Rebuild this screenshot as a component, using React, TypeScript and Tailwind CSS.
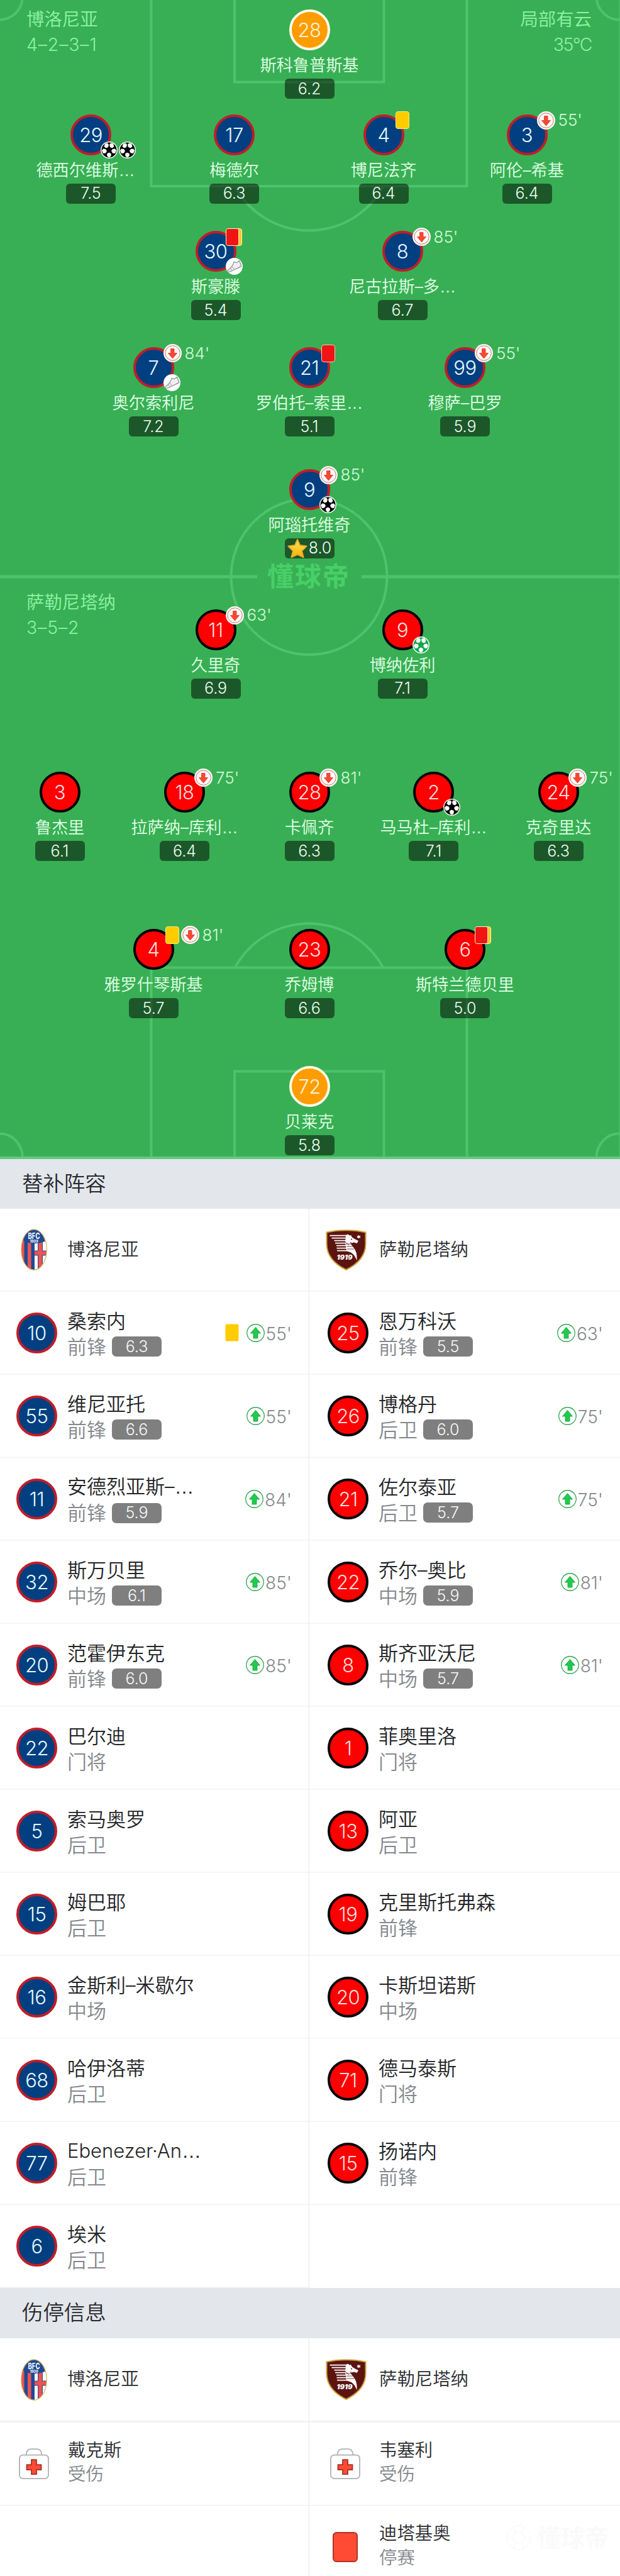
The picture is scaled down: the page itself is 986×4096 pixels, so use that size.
import clsx from 'clsx'

type Mark = 'yellow' | 'red' | 'second-yellow' | 'off'
type Bonus = 'goal' | 'penalty' | 'assist'
type Kit = 'bologna' | 'salernitana' | 'keeper'

interface PitchPlayer {
  x: number
  y: number
  no: number
  name: string
  rating: string
  kit: Kit
  marks?: Mark[]
  minute?: string
  bonus?: Bonus[]
  star?: boolean
  shifted?: boolean
}

interface BenchPlayer {
  no: number
  name: string
  role: string
  rating?: string
  minute?: string
  yellow?: boolean
}

const PLAYERS: PitchPlayer[] = [
  { x: 492, y: 47.5, no: 28, name: '斯科鲁普斯基', rating: '6.2', kit: 'keeper' },
  { x: 144.5, y: 214, no: 29, name: '德西尔维斯…', rating: '7.5', kit: 'bologna', bonus: ['goal', 'goal'], shifted: true },
  { x: 372.5, y: 214, no: 17, name: '梅德尔', rating: '6.3', kit: 'bologna' },
  { x: 610, y: 214, no: 4, name: '博尼法齐', rating: '6.4', kit: 'bologna', marks: ['yellow'] },
  { x: 838, y: 214, no: 3, name: '阿伦–希基', rating: '6.4', kit: 'bologna', marks: ['off'], minute: "55'" },
  { x: 343, y: 399.5, no: 30, name: '斯豪滕', rating: '5.4', kit: 'bologna', marks: ['second-yellow'], bonus: ['assist'] },
  { x: 640, y: 399.5, no: 8, name: '尼古拉斯–多…', rating: '6.7', kit: 'bologna', marks: ['off'], minute: "85'" },
  { x: 244, y: 584.5, no: 7, name: '奥尔索利尼', rating: '7.2', kit: 'bologna', marks: ['off'], minute: "84'", bonus: ['assist'] },
  { x: 492, y: 584.5, no: 21, name: '罗伯托–索里…', rating: '5.1', kit: 'bologna', marks: ['red'] },
  { x: 739.5, y: 584.5, no: 99, name: '穆萨–巴罗', rating: '5.9', kit: 'bologna', marks: ['off'], minute: "55'" },
  { x: 492, y: 778, no: 9, name: '阿瑙托维奇', rating: '8.0', kit: 'bologna', marks: ['off'], minute: "85'", bonus: ['goal'], star: true },
  { x: 343, y: 1001, no: 11, name: '久里奇', rating: '6.9', kit: 'salernitana', marks: ['off'], minute: "63'" },
  { x: 640, y: 1001, no: 9, name: '博纳佐利', rating: '7.1', kit: 'salernitana', bonus: ['penalty'] },
  { x: 95, y: 1259.5, no: 3, name: '鲁杰里', rating: '6.1', kit: 'salernitana' },
  { x: 293.5, y: 1259.5, no: 18, name: '拉萨纳–库利…', rating: '6.4', kit: 'salernitana', marks: ['off'], minute: "75'" },
  { x: 492, y: 1259.5, no: 28, name: '卡佩齐', rating: '6.3', kit: 'salernitana', marks: ['off'], minute: "81'" },
  { x: 689.5, y: 1259.5, no: 2, name: '马马杜–库利…', rating: '7.1', kit: 'salernitana', bonus: ['goal'] },
  { x: 888, y: 1259.5, no: 24, name: '克奇里达', rating: '6.3', kit: 'salernitana', marks: ['off'], minute: "75'" },
  { x: 244, y: 1509.5, no: 4, name: '雅罗什琴斯基', rating: '5.7', kit: 'salernitana', marks: ['yellow', 'off'], minute: "81'" },
  { x: 492, y: 1509.5, no: 23, name: '乔姆博', rating: '6.6', kit: 'salernitana' },
  { x: 739.5, y: 1509.5, no: 6, name: '斯特兰德贝里', rating: '5.0', kit: 'salernitana', marks: ['second-yellow'] },
  { x: 492, y: 1727.5, no: 72, name: '贝莱克', rating: '5.8', kit: 'keeper' },
]

const HOME_BENCH: BenchPlayer[] = [
  { no: 10, name: '桑索内', role: '前锋', rating: '6.3', minute: "55'", yellow: true },
  { no: 55, name: '维尼亚托', role: '前锋', rating: '6.6', minute: "55'" },
  { no: 11, name: '安德烈亚斯–…', role: '前锋', rating: '5.9', minute: "84'" },
  { no: 32, name: '斯万贝里', role: '中场', rating: '6.1', minute: "85'" },
  { no: 20, name: '范霍伊东克', role: '前锋', rating: '6.0', minute: "85'" },
  { no: 22, name: '巴尔迪', role: '门将' },
  { no: 5, name: '索马奥罗', role: '后卫' },
  { no: 15, name: '姆巴耶', role: '后卫' },
  { no: 16, name: '金斯利–米歇尔', role: '中场' },
  { no: 68, name: '哈伊洛蒂', role: '后卫' },
  { no: 77, name: 'Ebenezer·An…', role: '后卫' },
  { no: 6, name: '埃米', role: '后卫' },
]

const AWAY_BENCH: BenchPlayer[] = [
  { no: 25, name: '恩万科沃', role: '前锋', rating: '5.5', minute: "63'" },
  { no: 26, name: '博格丹', role: '后卫', rating: '6.0', minute: "75'" },
  { no: 21, name: '佐尔泰亚', role: '后卫', rating: '5.7', minute: "75'" },
  { no: 22, name: '乔尔–奥比', role: '中场', rating: '5.9', minute: "81'" },
  { no: 8, name: '斯齐亚沃尼', role: '中场', rating: '5.7', minute: "81'" },
  { no: 1, name: '菲奥里洛', role: '门将' },
  { no: 13, name: '阿亚', role: '后卫' },
  { no: 19, name: '克里斯托弗森', role: '前锋' },
  { no: 20, name: '卡斯坦诺斯', role: '中场' },
  { no: 71, name: '德马泰斯', role: '门将' },
  { no: 15, name: '扬诺内', role: '前锋' },
]

const KITS: Record<Kit, string> = {
  bologna: 'bg-[#023f80] border-[#c01d28] text-[#e4f8ff]',
  salernitana: 'bg-[#fe0000] border-black text-[#ffdede]',
  keeper: 'bg-[#ff9c00] border-[#fffbe6] text-[#fff3da]',
}

function Shirt({ no, kit }: { no: number; kit: Kit }) {
  return (
    <div
      className={clsx(
        'flex size-[65px] shrink-0 items-center justify-center rounded-full border-4 text-[31px] leading-none font-light tracking-[-0.5px]',
        KITS[kit],
      )}
    >
      {no}
    </div>
  )
}

// the ellipsis of a cut-off name takes a full em on the baseline
function Name({ children }: { children: string }) {
  if (!children.endsWith('…')) return <>{children}</>
  return (
    <>
      {children.slice(0, -1)}
      <span className="font-['Liberation_Sans']">…</span>
    </>
  )
}

function Ball({ color }: { color: string }) {
  return (
    <svg viewBox="0 0 54 54" className="size-[27px]">
      <circle cx="27" cy="27" r="27" fill="#f4fff6" />
      <circle cx="27" cy="27" r="24" fill={color} />
      <g fill="#fff">
        <path d="M14 7l8-2 4 5-2 8-7 3-6-5z" />
        <path d="M40 7l-8-2-4 5 2 8 7 3 6-5z" />
        <path d="M4 29l4-6 8 1 4 6-4 7-8 1z" />
        <path d="M50 29l-4-6-8 1-4 6 4 7 8 1z" />
        <path d="M27 35l7 4-1 8-6 4-6-4-1-8z" />
      </g>
    </svg>
  )
}

function Boot() {
  return (
    <svg viewBox="0 0 100 100" className="size-[27px]">
      <circle cx="50" cy="50" r="50" fill="#fff" />
      <path
        d="M6 78C20 72 26 60 34 52C42 44 46 36 48 23L62 29C68 27 72 21 80 17L92 48C76 60 62 62 50 70C36 80 20 84 9 83Z"
        fill="#f0f0f0"
        stroke="#858289"
        strokeWidth="4"
        strokeLinejoin="round"
      />
      <path d="M28 60L38 76M37 50L50 69" stroke="#858289" strokeWidth="3" />
    </svg>
  )
}

function OffIcon() {
  return (
    <svg viewBox="0 0 58 58" className="size-[29px] shrink-0">
      <circle cx="29" cy="29" r="29" fill="#fff8f5" />
      <circle cx="29" cy="29" r="23.5" fill="none" stroke="#b9535a" strokeWidth="1.6" />
      <path
        d="M23 15H34V29H43L29 46L15 29H23Z"
        fill="#fb4631"
        stroke="#d33526"
        strokeWidth="1.5"
        strokeLinejoin="round"
      />
    </svg>
  )
}

function OnIcon() {
  return (
    <svg viewBox="0 0 58 58" className="size-[29px] shrink-0">
      <circle cx="29" cy="29" r="27.5" fill="#fff" stroke="#33a853" strokeWidth="2.6" />
      <path
        d="M22 46H36V30H45L29 11L13 30H22Z"
        fill="#20cb4c"
        stroke="#169a3a"
        strokeWidth="1.5"
        strokeLinejoin="round"
      />
    </svg>
  )
}

function MarkIcon({ mark }: { mark: Mark }) {
  if (mark === 'off') return <OffIcon />
  if (mark === 'second-yellow') {
    return (
      <div className="h-7 w-[26px] rounded-[4px] border border-[#fff6b8] bg-[#fbc62a]">
        <div className="h-full w-5 rounded-[3px] border-r border-[#ffe0c0] bg-[#f01414]" />
      </div>
    )
  }
  return (
    <div
      className={clsx(
        'ml-[3px] h-7 w-[22px] rounded-[4px] border',
        mark === 'yellow' ? 'border-[#ffeb8a] bg-[#ffcc00]' : 'border-[#ffc9b0] bg-[#f01414]',
      )}
    />
  )
}

function Star() {
  return (
    <svg viewBox="0 0 72 72" className="-ml-[2px] size-9 shrink-0">
      <defs>
        <linearGradient id="star" x1="0" y1="0" x2="0" y2="1">
          <stop offset="0" stopColor="#ffe666" />
          <stop offset="1" stopColor="#ffb000" />
        </linearGradient>
      </defs>
      <path
        d="M36 8L44 26L65 29L50 44L55 64L36 55L17 64L22 44L7 29L28 26Z"
        fill="url(#star)"
        stroke="#f0ae22"
        strokeWidth="4"
        strokeLinejoin="round"
      />
    </svg>
  )
}

function PlayerPin({ player }: { player: PitchPlayer }) {
  const { x, y, no, name, rating, kit, marks, minute, bonus, star, shifted } = player
  return (
    <div
      className="absolute flex w-[200px] -translate-x-1/2 flex-col items-center"
      style={{ left: x, top: y - 32.5 }}
    >
      <div className="relative">
        <Shirt no={no} kit={kit} />
        {marks && (
          <div className="absolute -top-[5px] left-[48px] flex h-[29px] items-center gap-[3px]">
            {marks.map((m) => (
              <MarkIcon key={m} mark={m} />
            ))}
            {minute && (
              <span className="ml-[2px] text-[26px] leading-none font-light text-[#d3fbda]">{minute}</span>
            )}
          </div>
        )}
        {bonus && (
          <div className="absolute top-[43px] left-[48px] flex gap-[2px]">
            {bonus.map((b, i) =>
              b === 'assist' ? <Boot key={i} /> : <Ball key={i} color={b === 'goal' ? '#000' : '#12a84e'} />,
            )}
          </div>
        )}
      </div>
      <div
        className={clsx(
          'mt-[6px] text-[26.2px] leading-9 font-[350] whitespace-nowrap text-[#e0ffe6]',
          shifted && 'pr-[17px]',
        )}
      >
        <Name>{name}</Name>
      </div>
      <div className="mt-[3px] flex h-8 w-[79px] items-center justify-center rounded-[6px] bg-black/50 text-[25px] leading-none font-light text-[#ecfff0]">
        {star && <Star />}
        {rating}
      </div>
    </div>
  )
}

function PitchLines() {
  return (
    <svg viewBox="0 0 986 1843" className="absolute inset-0 h-full w-full" fill="none" stroke="#4ec36b" strokeWidth="4">
      <path d="M240.5 0V296H742.5V0" />
      <path d="M373 0V130.5H610.5V0" />
      <path d="M374 297A134 134 0 0 0 609 297" />
      <path d="M0 31.5A37 37 0 0 0 35.5 0M986 31.5A37 37 0 0 1 949 0" />
      <circle cx="491.5" cy="917" r="124" />
      <path d="M0 917H409M575 917H986" strokeWidth="5" />
      <path d="M240.5 1843V1538.5H742.5V1843" />
      <path d="M373 1843V1703.5H610.5V1843" />
      <path d="M374 1538A134 134 0 0 1 609 1538" />
      <path d="M0 1802.5A36 39 0 0 1 36 1843M986 1802.5A36 39 0 0 0 948.5 1843" />
      <path d="M985.5 0V1843" strokeWidth="1.5" />
      <path d="M0 1841H986" stroke="#63ca7e" />
    </svg>
  )
}

function Pitch() {
  return (
    <div className="relative h-[1843px] shrink-0 overflow-hidden bg-[#38af54]">
      <PitchLines />
      <div className="absolute top-[13px] left-[42px] text-[28.4px] leading-9 font-[350] text-[#8ff3a4]">
        <p>博洛尼亚</p>
        <p className="mt-1 font-light tracking-[0.9px]">4–2–3–1</p>
      </div>
      <div className="absolute top-[13px] right-[45px] text-right text-[28.4px] leading-9 font-[350] text-[#8ff3a4]">
        <p>局部有云</p>
        <p className="mt-1 font-light tracking-[-1.5px]">35°C</p>
      </div>
      <div className="absolute top-[940px] left-[42px] text-[28.4px] leading-9 font-[350] text-[#8ff3a4]">
        <p>萨勒尼塔纳</p>
        <p className="mt-1 font-light tracking-[0.9px]">3–5–2</p>
      </div>
      <div className="absolute top-[893px] left-[425px] text-[42px] leading-[48px] font-bold tracking-[2px] text-[#47cf68]">
        懂球帝
      </div>
      {PLAYERS.map((p) => (
        <PlayerPin key={p.name} player={p} />
      ))}
    </div>
  )
}

function BolognaCrest() {
  return (
    <svg viewBox="0 0 84 132" className="h-[66px] w-[42px]">
      <defs>
        <clipPath id="bfc">
          <ellipse cx="42" cy="66" rx="40" ry="64" />
        </clipPath>
      </defs>
      <g clipPath="url(#bfc)">
        <rect width="84" height="132" fill="#fff" />
        <rect width="44" height="132" fill="#1f4a94" />
        <rect width="11" height="132" fill="#ee5350" />
        <rect x="22" width="11" height="132" fill="#ee5350" />
        <path d="M62 38V132M44 77H84" stroke="#3c4f94" strokeWidth="16" />
        <path d="M62 38V132M44 77H84" stroke="#ee5350" strokeWidth="11" />
        <path d="M68 110H84V132H60Z" fill="#ee5350" />
        <path d="M0 0H84V36C62 50 26 50 8 36Z" fill="#1f4a94" />
      </g>
      <ellipse cx="42" cy="66" rx="40.5" ry="64.5" fill="none" stroke="#d9b45c" strokeWidth="2.5" />
      <text x="42" y="32" textAnchor="middle" fontSize="26" fontWeight="700" fill="#fff" textLength="38" lengthAdjust="spacingAndGlyphs">
        BFC
      </text>
      <text x="42" y="43" textAnchor="middle" fontSize="11" fontWeight="700" fill="#fff">
        1909
      </text>
    </svg>
  )
}

function SalernitanaCrest() {
  return (
    <svg viewBox="0 0 130 130" className="size-[65px]">
      <path
        d="M3 9C40 0 90 0 127 9V45C127 85 98 112 65 128C32 112 3 85 3 45Z"
        fill="#5c1410"
        stroke="#cfa23c"
        strokeWidth="4"
      />
      <path
        d="M64 18L71 15L75 19L80 18L84 25L92 30L104 36L99 44L90 41L82 43L78 39C78 48 90 56 94 66C100 78 99 88 99 99C95 88 90 80 82 74L66 68L62 42Z"
        fill="#fff"
      />
      <path
        d="M13 19H70M19 27H66M27 35H66M30 43H72M34 51H80M35 59H88M36 67H84"
        stroke="#fff"
        strokeWidth="3.5"
      />
      <path d="M64 46H80M66 54H86M68 62H90M60 38L74 50" stroke="#5c1410" strokeWidth="1.6" />
      <circle cx="82" cy="31" r="2" fill="#5c1410" />
      <path d="M105 17L107 21L111 19L109 23L111 27L107 26L105 29L103 26L99 27L101 23L99 19L103 21Z" fill="#fff" />
      <text x="60" y="96" textAnchor="middle" fontSize="20" fontWeight="900" fontStyle="italic" fill="#fff" textLength="50" lengthAdjust="spacingAndGlyphs">
        1919
      </text>
    </svg>
  )
}

function SectionTitle({ children, className }: { children: string; className: string }) {
  return (
    <h2
      className={clsx(
        'flex shrink-0 items-center bg-[#e3e6eb] pl-[35px] text-[33.4px] leading-none font-[350] text-[#27292d]',
        className,
      )}
    >
      {children}
    </h2>
  )
}

function TeamHeads() {
  return (
    <div className="flex h-full">
      <div className="flex w-[492px] items-center border-r border-[#e4e5e7] pl-[33px]">
        <BolognaCrest />
        <span className="ml-[32px] text-[28.4px] leading-none font-[350] text-[#2a2c30]">博洛尼亚</span>
      </div>
      <div className="flex flex-1 items-center pl-[26px]">
        <SalernitanaCrest />
        <span className="ml-[20px] text-[28.4px] leading-none font-[350] text-[#2a2c30]">萨勒尼塔纳</span>
      </div>
    </div>
  )
}

function BenchRow({ player, kit }: { player: BenchPlayer; kit: Kit }) {
  return (
    <div className="flex h-[132px] items-center border-b-2 border-[#f5f6f7] pr-[27px]">
      <Shirt no={player.no} kit={kit} />
      <div className="ml-[16px] flex flex-col pt-[3px]">
        <span className="text-[31px] leading-[41px] font-[350] whitespace-nowrap text-[#232528]">
          <Name>{player.name}</Name>
        </span>
        <div className="flex h-[41px] items-center">
          <span className="text-[31px] leading-[41px] font-[350] text-[#84888d]">{player.role}</span>
          {player.rating && (
            <span className="ml-[9px] flex h-8 w-[79px] items-center justify-center rounded-[7px] bg-[#7f7f7f] text-[25px] leading-none font-light text-[#f8f8f8]">
              {player.rating}
            </span>
          )}
        </div>
      </div>
      {player.minute && (
        <div className="ml-auto flex items-center">
          {player.yellow && <div className="mr-3 h-7 w-[22px] rounded-[3px] border border-[#ffe27a] bg-[#ffcc00]" />}
          <OnIcon />
          <span className="ml-[2px] pt-1 text-[28px] leading-none font-light text-[#85888b]">{player.minute}</span>
        </div>
      )}
    </div>
  )
}

function Medkit() {
  return (
    <svg viewBox="0 0 96 98" className="h-[49px] w-12" strokeWidth="3.5">
      <path d="M23 21C24 8 30 2 38 2H58C66 2 72 8 73 21" fill="none" stroke="#adb0b4" />
      <rect x="2" y="21" width="92" height="75" rx="11" fill="#fff" stroke="#adb0b4" />
      <path d="M40 36H56V52H71V68H56V82H40V68H25V52H40Z" fill="#ff4b33" stroke="#a93226" />
    </svg>
  )
}

function AbsentRow({ name, reason, card }: { name: string; reason: string; card?: boolean }) {
  return (
    <div className="flex h-full items-center">
      <div className="flex w-12 justify-center">
        {card ? <div className="h-12 w-10 rounded-[6px] border-2 border-[#b03527] bg-[#ff4b33]" /> : <Medkit />}
      </div>
      <div className="ml-[30px] pb-[5px] text-[28.4px] leading-[38.5px] font-[350] whitespace-nowrap">
        <p className="text-[#2a2c30]">{name}</p>
        <p className="text-[#84888d]">{reason}</p>
      </div>
    </div>
  )
}

function Watermark() {
  return (
    <div className="absolute right-[18px] bottom-[41px] flex items-center gap-[9px]">
      <svg viewBox="0 0 80 80" className="size-10" fill="none" stroke="#f6f6f7" strokeWidth="2">
        <circle cx="40" cy="40" r="38" />
        <path d="M30 24H50L60 40L50 56H30L20 40Z" />
        <path d="M30 24L24 8M50 24L56 8M60 40H78M50 56L56 72M30 56L24 72M20 40H2" />
      </svg>
      <span className="text-[38px] leading-none font-bold text-[#fafafb]">懂球帝</span>
    </div>
  )
}

export default function App() {
  return (
    <div className="relative flex h-[4096px] w-[986px] flex-col overflow-hidden bg-white font-[Inter,'Noto_Sans_CJK_SC',sans-serif]">
      <Pitch />

      <SectionTitle className="h-[79px]">替补阵容</SectionTitle>
      <div className="h-[132px] shrink-0 border-b-2 border-[#f5f6f7]">
        <TeamHeads />
      </div>
      <div className="flex shrink-0">
        <div className="w-[492px] border-r border-[#e4e5e7] *:pl-[26px]">
          {HOME_BENCH.map((p) => (
            <BenchRow key={p.no} player={p} kit="bologna" />
          ))}
        </div>
        <div className="flex-1 *:pl-[29px]">
          {AWAY_BENCH.map((p) => (
            <BenchRow key={p.no} player={p} kit="salernitana" />
          ))}
        </div>
      </div>

      <SectionTitle className="h-20">伤停信息</SectionTitle>
      <div className="h-[134px] shrink-0 border-b-[3px] border-[#f1f2f3]">
        <TeamHeads />
      </div>
      <div className="flex h-[132px] shrink-0 border-b border-[#eceded]">
        <div className="w-[492px] border-r border-[#e4e5e7] pl-[30px]">
          <AbsentRow name="戴克斯" reason="受伤" />
        </div>
        <div className="flex-1 pl-[33px]">
          <AbsentRow name="韦塞利" reason="受伤" />
        </div>
      </div>
      <div className="flex h-[132px] shrink-0">
        <div className="w-[492px] border-r border-[#e4e5e7]" />
        <div className="flex-1 pl-[33px]">
          <AbsentRow name="迪塔基奥" reason="停赛" card />
        </div>
      </div>
      <Watermark />
    </div>
  )
}
